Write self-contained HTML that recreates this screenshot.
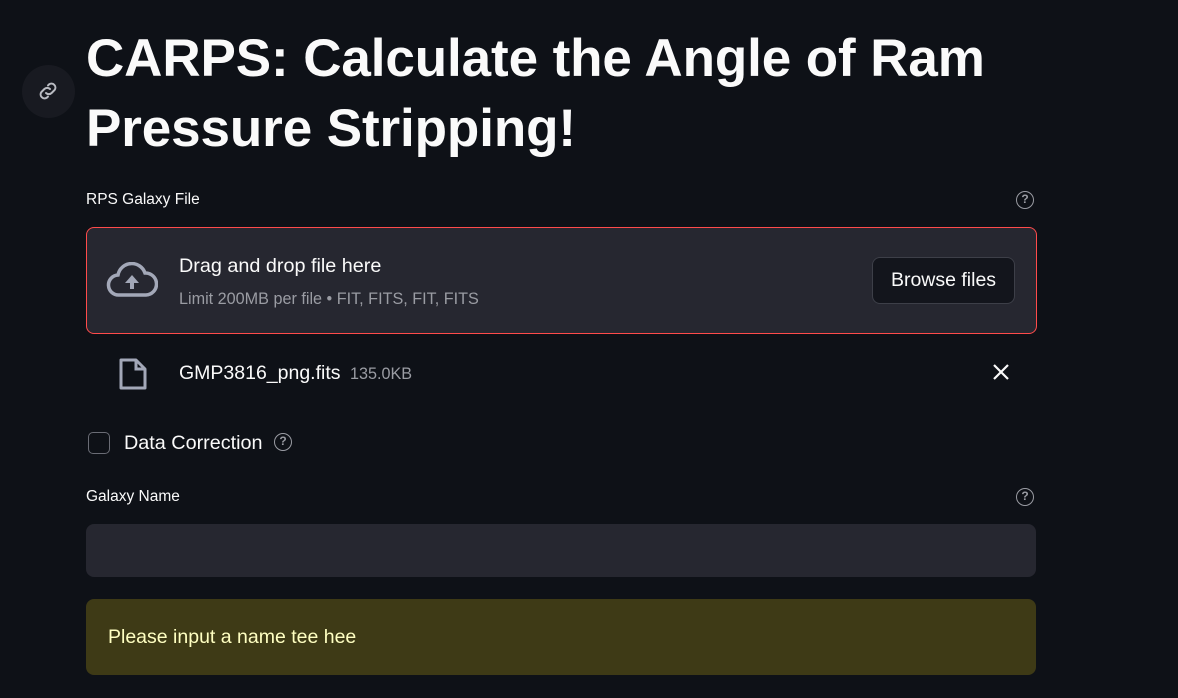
<!DOCTYPE html>
<html><head><style>
*{box-sizing:border-box;margin:0;padding:0}
body{width:1178px;height:698px;background:#0e1117;color:#fafafa;font-family:"Liberation Sans",sans-serif;position:relative;overflow:hidden}
.a{position:absolute}
h1{position:absolute;left:86px;top:24px;font-size:53px;font-weight:bold;line-height:70px;letter-spacing:-0.1px;width:1000px}
.lbl{font-size:15.5px;color:#fafafa}
.q{width:18px;height:18px;border:1.5px solid #9a9ca3;border-radius:50%;color:#9a9ca3;font-size:12px;text-align:center;line-height:15px;font-weight:bold}
</style></head><body>
<div class="a" style="left:22px;top:65px;width:53px;height:53px;border-radius:50%;background:#181a21"></div>
<svg class="a" style="left:36px;top:79px" width="24" height="24" viewBox="0 0 24 24" fill="none" stroke="#b9bbc2" stroke-width="2" stroke-linecap="round"><path d="M10 14a4 4 0 0 0 5.6 0l3-3a4 4 0 0 0-5.6-5.6l-1 1"/><path d="M14 10a4 4 0 0 0-5.6 0l-3 3a4 4 0 0 0 5.6 5.6l1-1"/></svg>
<h1>CARPS: Calculate the Angle of Ram Pressure Stripping!</h1>
<div class="a lbl" style="left:86px;top:191px">RPS Galaxy File</div>
<div class="a q" style="left:1016px;top:191px">?</div>
<div class="a" style="left:86px;top:227px;width:951px;height:107px;background:#262730;border:1px solid #ff4b4b;border-radius:8px"></div>
<svg class="a" style="left:106px;top:262px" width="52" height="36" viewBox="0 0 52 36"><path d="M13 33a10 10 0 0 1-1-20 14 14 0 0 1 27-2 10 10 0 0 1 1 22z" fill="none" stroke="#a3a8b8" stroke-width="3.5"/><path d="M26 13l-7 8h5v6h4v-6h5z" fill="#a3a8b8"/></svg>
<div class="a" style="left:179px;top:255px;font-size:19.8px">Drag and drop file here</div>
<div class="a" style="left:179px;top:290px;font-size:16.2px;color:#9a9ca3">Limit 200MB per file • FIT, FITS, FIT, FITS</div>
<div class="a" style="left:872px;top:257px;width:143px;height:47px;background:#13151c;border:1px solid #3d3f48;border-radius:8px;font-size:19.5px;text-align:center;line-height:45px">Browse files</div>
<svg class="a" style="left:118px;top:357px" width="30" height="34" viewBox="0 0 30 34"><path d="M3 3h15l9 9v19H3z" fill="none" stroke="#a3a8b8" stroke-width="3" stroke-linejoin="round"/><path d="M18 3v9h9" fill="none" stroke="#a3a8b8" stroke-width="3"/></svg>
<div class="a" style="left:179px;top:362px;font-size:19.5px">GMP3816_png.fits <span style="font-size:16.2px;color:#9a9ca3;margin-left:4px">135.0KB</span></div>
<svg class="a" style="left:992px;top:363px" width="18" height="18" viewBox="0 0 18 18" stroke="#fafafa" stroke-width="2.2"><path d="M2 2l14 14M16 2L2 16"/></svg>
<div class="a" style="left:88px;top:432px;width:22px;height:22px;border:1.5px solid #6a6c75;border-radius:5px"></div>
<div class="a" style="left:124px;top:432px;font-size:19.8px">Data Correction</div>
<div class="a q" style="left:274px;top:433px">?</div>
<div class="a lbl" style="left:86px;top:488px">Galaxy Name</div>
<div class="a q" style="left:1016px;top:488px">?</div>
<div class="a" style="left:86px;top:524px;width:950px;height:53px;background:#262730;border-radius:8px"></div>
<div class="a" style="left:86px;top:599px;width:950px;height:76px;background:#3e3a16;border-radius:8px"></div>
<div class="a" style="left:108px;top:626px;font-size:19.5px;color:#ffffc2">Please input a name tee hee</div>
</body></html>
